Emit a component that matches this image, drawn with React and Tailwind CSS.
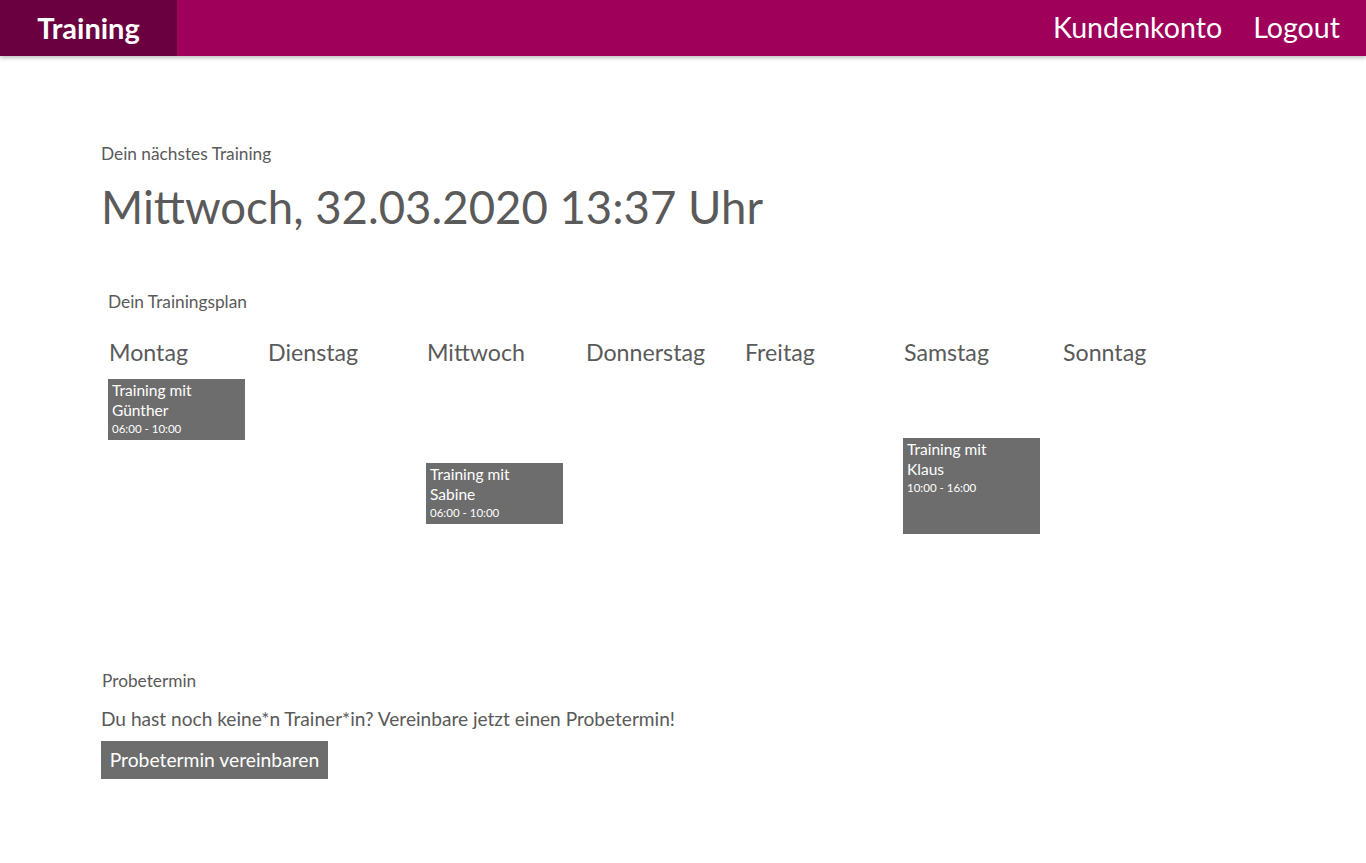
const font = { fontFamily: '"Lato", "Open Sans", sans-serif' };

const days = [
  { name: "Montag", session: { trainer: "Günther", time: "06:00 - 10:00", top: "mt-[11px]", height: "h-[61px]" } },
  { name: "Dienstag" },
  { name: "Mittwoch", session: { trainer: "Sabine", time: "06:00 - 10:00", top: "mt-[95px]", height: "h-[61px]" } },
  { name: "Donnerstag" },
  { name: "Freitag" },
  { name: "Samstag", session: { trainer: "Klaus", time: "10:00 - 16:00", top: "mt-[70px]", height: "h-[96px]" } },
  { name: "Sonntag" },
];

const SessionCard = ({ session }) => (
  <div className={`${session.top} ${session.height} w-[137px] bg-[#6d6d6d] px-[4px] pt-[1px] text-white`}>
    <div className="text-[15.5px] leading-[20px]">Training mit</div>
    <div className="text-[15.5px] leading-[20px]">{session.trainer}</div>
    <div className="text-[11.5px] leading-[17px]">{session.time}</div>
  </div>
);

export default function App() {
  return (
    <div className="min-h-screen bg-white text-[#5a5a5a]" style={font}>
      <header className="flex h-[56px] items-stretch justify-between bg-[#9e005a] shadow-[0_2px_4px_rgba(0,0,0,0.25)]">
        <div className="flex w-[177px] items-center justify-center bg-[#6b0040] pb-[1px] text-[29px] font-bold text-white">
          Training
        </div>
        <nav className="flex items-center gap-[31px] pr-[26px] pb-[1px] text-[28.6px] text-white">
          <a href="#">Kundenkonto</a>
          <a href="#">Logout</a>
        </nav>
      </header>

      <main className="px-[101px] pt-[86px]">
        <section>
          <p className="text-[17.3px] leading-[24px]">Dein nächstes Training</p>
          <h1 className="mt-[11px] text-[45.5px] leading-[60px]">Mittwoch, 32.03.2020 13:37 Uhr</h1>
        </section>

        <section className="mt-[53px] pl-[7px]">
          <p className="text-[17.3px] leading-[24px]">Dein Trainingsplan</p>
          <div className="mt-[22px] grid w-[1113px] grid-cols-7">
            {days.map((day) => (
              <div key={day.name} className="h-[300px]">
                <h2 className="pl-[1px] text-[23.2px] leading-[32px]">{day.name}</h2>
                {day.session && <SessionCard session={day.session} />}
              </div>
            ))}
          </div>
        </section>

        <section className="mt-[33px]">
          <p className="pl-[1px] text-[17.3px] leading-[24px]">Probetermin</p>
          <p className="mt-[13px] text-[19.1px] leading-[26px]">
            Du hast noch keine*n Trainer*in? Vereinbare jetzt einen Probetermin!
          </p>
          <button className="mt-[9px] h-[38px] w-[227px] bg-[#6d6d6d] text-[19.3px] text-white">
            Probetermin vereinbaren
          </button>
        </section>
      </main>
    </div>
  );
}
